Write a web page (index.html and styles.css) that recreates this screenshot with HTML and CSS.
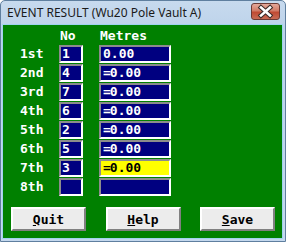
FILE: index.html
```html
<!DOCTYPE html>
<html lang="en">
<head>
  <meta charset="UTF-8">
  <title>Event Result</title>
  <link rel="stylesheet" href="styles.css">
</head>
<body>
  <div class="window">
    <div class="titlebar">
      <span class="title">EVENT RESULT (Wu20 Pole Vault A)</span>
      <div class="close">
        <svg width="29" height="17" viewBox="0 0 29 17">
          <path d="M10 4.5 L19 12.5 M19 4.5 L10 12.5" stroke="#3a2a28" stroke-width="4.6" stroke-linecap="square"/>
          <path d="M10 4.5 L19 12.5 M19 4.5 L10 12.5" stroke="#ffffff" stroke-width="2.6" stroke-linecap="square"/>
        </svg>
      </div>
    </div>
    <div class="client">
      <div class="grid">
        <span></span><span class="head">No</span><span class="head">Metres</span>

        <span class="place">1st</span><span class="box no">1</span><span class="box metres">0.00</span>
        <span class="place">2nd</span><span class="box no">4</span><span class="box metres"><span class="eq">=</span>0.00</span>
        <span class="place">3rd</span><span class="box no">7</span><span class="box metres"><span class="eq">=</span>0.00</span>
        <span class="place">4th</span><span class="box no">6</span><span class="box metres"><span class="eq">=</span>0.00</span>
        <span class="place">5th</span><span class="box no">2</span><span class="box metres"><span class="eq">=</span>0.00</span>
        <span class="place">6th</span><span class="box no">5</span><span class="box metres"><span class="eq">=</span>0.00</span>
        <span class="place">7th</span><span class="box no">3</span><span class="box metres active"><span class="eq">=</span>0.00</span>
        <span class="place">8th</span><span class="box no"></span><span class="box metres"></span>
      </div>
      <div class="buttons">
        <button class="btn"><u>Q</u>uit</button>
        <button class="btn"><u>H</u>elp</button>
        <button class="btn"><u>S</u>ave</button>
      </div>
    </div>
  </div>
</body>
</html>
```

FILE: styles.css
```css
body {
  margin: 0;
  background-color: #ffffff;
}

.window {
  width: 286px;
  height: 242px;
  box-sizing: border-box;
  border: 1px solid #5f7f9f;
  border-radius: 5px 5px 0 0;
  background: linear-gradient(#c7daee, #bcd2ea 30px, #c4d8ee);
  display: flex;
  flex-direction: column;
}

.titlebar {
  height: 24px;
  display: flex;
  align-items: center;
  justify-content: space-between;
  padding: 0 5px 0 6px;
}

.title {
  font-family: "Noto Sans", sans-serif;
  font-size: 12px;
  color: #1a1a1a;
  margin-top: -1px;
}

.close {
  width: 29px;
  height: 17px;
  margin-top: -3px;
  box-sizing: border-box;
  border: 1px solid #6b3a35;
  border-radius: 3px;
  background: linear-gradient(#e4a899, #d27b67 45%, #c04a33 55%, #c86b55);
  display: flex;
}

.close svg {
  margin: -1px;
}

.client {
  flex: 1;
  margin: 0 3px 3px 2px;
  background-color: #008000;
  outline: 1px solid #9fd3ee;
  font-family: "DejaVu Sans Mono", monospace;
  font-weight: bold;
  font-size: 13px;
  color: #ffffff;
}

.grid {
  display: grid;
  grid-template-columns: 39px 40px 72px;
  grid-template-rows: 17px repeat(8, 18px);
  row-gap: 1px;
  padding: 2px 0 0 17px;
}

.head {
  line-height: 17px;
  margin-left: 1px;
}

.place {
  line-height: 18px;
}

.box {
  height: 18px;
  box-sizing: border-box;
  border: 2px solid;
  border-color: #8c8c8c #ffffff #ffffff #8c8c8c;
  background-color: #000080;
  line-height: 14px;
  padding-left: 1px;
  white-space: pre;
}

.no {
  width: 24px;
}

.metres {
  width: 72px;
  padding-left: 2px;
}

.eq {
  margin-right: -1px;
}

.active {
  background-color: #ffff00;
  color: #000000;
}

.buttons {
  display: flex;
  justify-content: space-between;
  padding: 11px 7px 0 8px;
}

.btn {
  width: 75px;
  height: 24px;
  box-sizing: border-box;
  border: 2px solid;
  border-color: #ffffff #808080 #808080 #ffffff;
  background-color: #ececec;
  font-family: "DejaVu Sans Mono", monospace;
  font-weight: bold;
  font-size: 13px;
  color: #000000;
  padding: 0;
}
```
